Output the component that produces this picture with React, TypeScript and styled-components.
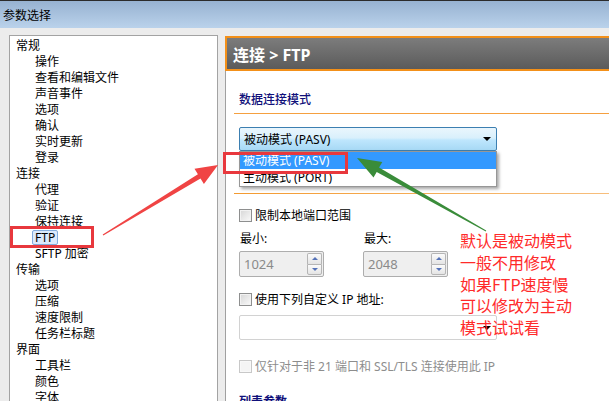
import React from 'react';
import styled, { createGlobalStyle } from 'styled-components';

const Global = createGlobalStyle`
  html, body { margin: 0; padding: 0; background: #ececec; }
  body { font-family: 'Noto Sans', 'Noto Sans CJK SC', sans-serif; }
`;

const FONT = `'Noto Sans', 'Noto Sans CJK SC', sans-serif`;

const Window = styled.div`
  position: relative;
  width: 609px;
  height: 401px;
  overflow: hidden;
  background: #ececec;
  display: flex;
  flex-direction: column;
  border-top: 1px solid #2b2b2b;
  box-sizing: border-box;
  font-family: ${FONT};
`;

const TitleBar = styled.div`
  height: 27px;
  flex-shrink: 0;
  background: linear-gradient(#97b2d1, #bad2eb);
  display: flex;
  align-items: center;
  padding-left: 3px;
  font-size: 12px;
  color: #000;
`;

const Body = styled.div`
  flex: 1;
  min-height: 0;
  display: flex;
  gap: 7px;
  padding: 7px 0 0 9px;
`;

const Tree = styled.div`
  width: 209px;
  flex-shrink: 0;
  box-sizing: border-box;
  border: 1px solid #a3a3a3;
  border-bottom: none;
  background: #fff;
  padding-top: 2px;
`;

const TreeRow = styled.div<{ $level: number }>`
  height: 16px;
  line-height: 16px;
  font-size: 12px;
  color: #000;
  white-space: nowrap;
  padding-left: ${(p) => (p.$level === 0 ? 6 : 25)}px;
`;

const Selected = styled.span`
  display: inline-block;
  height: 13px;
  line-height: 13px;
  padding: 0 2px;
  margin-left: -3px;
  border: 1px solid #84acdd;
  border-radius: 2px;
  background: #dceafc;
`;

const Right = styled.div`
  flex: 0 0 400px;
  display: flex;
  flex-direction: column;
  margin-top: 1px;
`;

const Header = styled.div`
  height: 35px;
  flex-shrink: 0;
  box-sizing: border-box;
  border: 2px solid #f39019;
  background: linear-gradient(#7c7c7c, #5b5b5b);
  color: #fff;
  font-size: 16px;
  font-weight: bold;
  display: flex;
  align-items: center;
  padding-left: 6px;
`;

const Content = styled.div`
  flex: 1;
  background: #fff;
  border-left: 1px solid #a0a0a0;
  padding-left: 13px;
  display: flex;
  flex-direction: column;
  align-items: flex-start;
`;

const SectionTitle = styled.div<{ $top: number }>`
  align-self: stretch;
  margin: ${(p) => p.$top}px 0 0 -5px;
  padding: 0 0 5px 5px;
  font-size: 12px;
  line-height: 16px;
  font-weight: 500;
  color: #10107a;
  border-bottom: 1px solid #f5a040;
`;

const Rule = styled.div<{ $top: number }>`
  align-self: stretch;
  margin: ${(p) => p.$top}px 0 0 -5px;
  height: 1px;
  background: linear-gradient(90deg, #f39a30, #f7c080);
`;

const ComboWrap = styled.div<{ $top: number }>`
  position: relative;
  margin-top: ${(p) => p.$top}px;
`;

const Combo = styled.div<{ $active?: boolean }>`
  width: 258px;
  height: ${(p) => (p.$active ? 24 : 25)}px;
  box-sizing: border-box;
  border: 1px solid ${(p) => (p.$active ? '#3c7fb1' : '#d2d2d2')};
  border-radius: 2px;
  background: ${(p) =>
    p.$active
      ? 'linear-gradient(#eaf6fd 0%, #d9f0fc 45%, #bee6fd 55%, #a7d9f5 100%)'
      : '#fff'};
  display: flex;
  align-items: center;
  justify-content: space-between;
  padding: 0 4px 0 4px;
  font-size: 12px;
  color: #000;
`;

const Caret = styled.span`
  width: 0;
  height: 0;
  border-left: 4px solid transparent;
  border-right: 4px solid transparent;
  border-top: 4px solid #000;
  margin-right: 1px;
`;

const List = styled.div`
  position: absolute;
  left: 0;
  top: 100%;
  width: 258px;
  box-sizing: border-box;
  border: 1px solid #979797;
  background: #fff;
  box-shadow: 2px 2px 3px rgba(0, 0, 0, 0.35);
  z-index: 2;
`;

const ListItem = styled.div<{ $hl?: boolean }>`
  height: 17px;
  line-height: 17px;
  padding-left: 3px;
  font-size: 12px;
  color: ${(p) => (p.$hl ? '#fff' : '#000')};
  background: ${(p) => (p.$hl ? '#3399ff' : 'transparent')};
`;

const CheckRow = styled.div<{ $top: number; $disabled?: boolean }>`
  margin-top: ${(p) => p.$top}px;
  height: 16px;
  display: flex;
  align-items: center;
  gap: 3px;
  font-size: 12px;
  color: ${(p) => (p.$disabled ? '#8d8d8d' : '#000')};
`;

const Box = styled.span<{ $disabled?: boolean }>`
  width: 13px;
  height: 13px;
  box-sizing: border-box;
  border: 1px solid ${(p) => (p.$disabled ? '#c8c8c8' : '#8e8f8f')};
  background: ${(p) =>
    p.$disabled ? '#f4f4f4' : 'linear-gradient(135deg, #d6d6d6, #fafafa)'};
  box-shadow: inset 0 0 0 1px ${(p) => (p.$disabled ? '#f8f8f8' : '#f2f2f2')};
`;

const Grid = styled.div<{ $top: number }>`
  margin-top: ${(p) => p.$top}px;
  display: grid;
  grid-template-columns: 85px 85px;
  column-gap: 39px;
`;

const Label = styled.div`
  font-size: 12px;
  line-height: 16px;
  color: #000;
  padding-left: 1px;
`;

const Spin = styled.div`
  height: 26px;
  box-sizing: border-box;
  border: 1px solid #adadad;
  border-radius: 2px;
  background: #efefef;
  display: flex;
  align-items: center;
  justify-content: space-between;
  padding: 1px 1px 1px 4px;
  font-size: 13px;
  color: #8a8a8a;
`;

const SpinBtns = styled.div`
  width: 15px;
  height: 22px;
  display: flex;
  flex-direction: column;
`;

const SpinBtn = styled.div<{ $up?: boolean }>`
  flex: 1;
  box-sizing: border-box;
  border: 1px solid #b5b5b5;
  ${(p) => (p.$up ? 'border-bottom: none; border-radius: 2px 2px 0 0;' : 'border-radius: 0 0 2px 2px;')}
  background: linear-gradient(#fbfbfb, #e4e4e4);
  display: flex;
  align-items: center;
  justify-content: center;
  &::after {
    content: '';
    width: 0;
    height: 0;
    border-left: 3px solid transparent;
    border-right: 3px solid transparent;
    ${(p) => (p.$up ? 'border-bottom: 3px solid #5572b8;' : 'border-top: 3px solid #5572b8;')}
  }
`;

const Heading2 = styled.div<{ $top: number }>`
  margin-top: ${(p) => p.$top}px;
  font-size: 12px;
  line-height: 16px;
  font-weight: bold;
  color: #10107a;
`;

const Note = styled.div`
  position: absolute;
  left: 460px;
  top: 229px;
  font-size: 16px;
  line-height: 21.75px;
  color: #ff2a2a;
  font-family: 'Noto Sans CJK SC', sans-serif;
  white-space: pre;
  z-index: 3;
`;

const Overlay = styled.svg`
  position: absolute;
  left: 0;
  top: 0;
  pointer-events: none;
  z-index: 4;
`;

const general = ['操作', '查看和编辑文件', '声音事件', '选项', '确认', '实时更新', '登录'];
const conn = ['代理', '验证', '保持连接', 'FTP', 'SFTP 加密'];
const transfer = ['选项', '压缩', '速度限制', '任务栏标题'];
const ui = ['工具栏', '颜色', '字体'];

const groups: [string, string[]][] = [
  ['常规', general],
  ['连接', conn],
  ['传输', transfer],
  ['界面', ui],
];

export default function App() {
  return (
    <>
      <Global />
      <Window>
        <TitleBar>参数选择</TitleBar>
        <Body>
          <Tree>
            {groups.map(([g, items]) => (
              <React.Fragment key={g}>
                <TreeRow $level={0}>{g}</TreeRow>
                {items.map((it) => (
                  <TreeRow $level={1} key={g + it}>
                    {it === 'FTP' ? <Selected>FTP</Selected> : it}
                  </TreeRow>
                ))}
              </React.Fragment>
            ))}
          </Tree>
          <Right>
            <Header>连接 &gt; FTP</Header>
            <Content>
              <SectionTitle $top={21}>数据连接模式</SectionTitle>
              <ComboWrap $top={13}>
                <Combo $active>
                  <span>被动模式 (PASV)</span>
                  <Caret />
                </Combo>
                <List>
                  <ListItem $hl>被动模式 (PASV)</ListItem>
                  <ListItem>主动模式 (PORT)</ListItem>
                </List>
              </ComboWrap>
              <Rule $top={42} />
              <CheckRow $top={13}>
                <Box />
                限制本地端口范围
              </CheckRow>
              <Grid $top={8}>
                <Label>最小:</Label>
                <Label>最大:</Label>
              </Grid>
              <Grid $top={4}>
                <Spin>
                  1024
                  <SpinBtns>
                    <SpinBtn $up />
                    <SpinBtn />
                  </SpinBtns>
                </Spin>
                <Spin>
                  2048
                  <SpinBtns>
                    <SpinBtn $up />
                    <SpinBtn />
                  </SpinBtns>
                </Spin>
              </Grid>
              <CheckRow $top={14}>
                <Box />
                使用下列自定义 IP 地址:
              </CheckRow>
              <ComboWrap $top={8}>
                <Combo>
                  <span />
                  <Caret />
                </Combo>
              </ComboWrap>
              <CheckRow $top={18} $disabled>
                <Box $disabled />
                仅针对于非 21 端口和 SSL/TLS 连接使用此 IP
              </CheckRow>
              <Heading2 $top={20}>列表参数</Heading2>
            </Content>
          </Right>
        </Body>
        <Note>{'默认是被动模式\n一般不用修改\n如果FTP速度慢\n可以修改为主动\n模式试试看'}</Note>
        <Overlay width={609} height={401} viewBox="0 0 609 401">
          <rect x={11.5} y={226.5} width={81} height={19} fill="none" stroke="#e8383d" strokeWidth={3} />
          <rect x={224.5} y={152.5} width={122} height={19} fill="none" stroke="#e8383d" strokeWidth={3} />
          <polygon
            points="218,164 194.5,167.7 197.9,173.3 102.7,233.5 103.3,234.5 200.5,177.5 203.9,183.1"
            fill="#f04444"
          />
          <polygon
            points="357,157 382.3,161 379.1,166.6 486.2,229.6 485.8,230.4 376.7,171 373.5,176.6"
            fill="#3a8c3a"
          />
        </Overlay>
      </Window>
    </>
  );
}
